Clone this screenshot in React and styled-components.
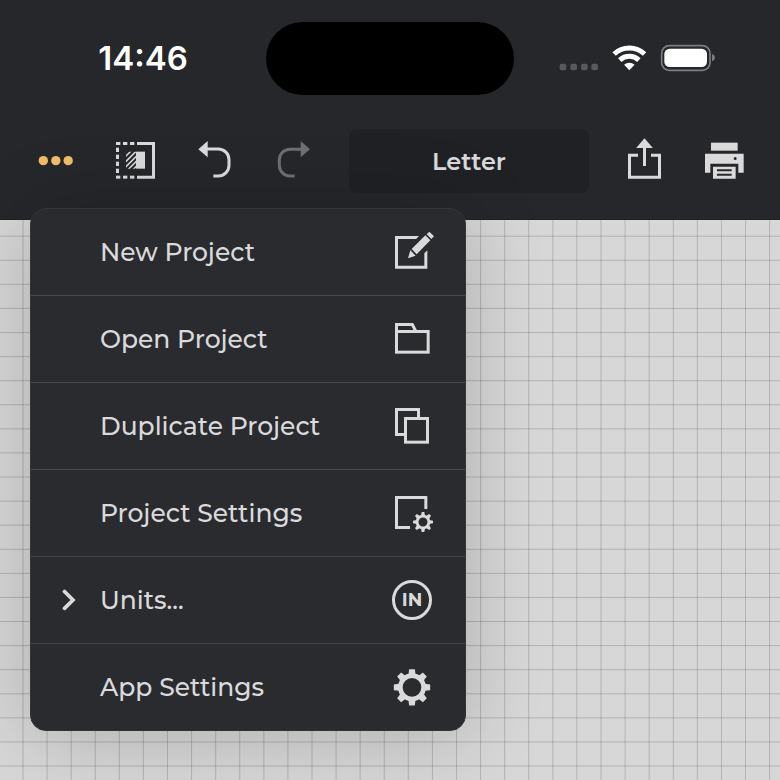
import React from "react";
import styled, { createGlobalStyle, css } from "styled-components";

const GlobalStyle = createGlobalStyle`
  *, *::before, *::after { box-sizing: border-box; }
  html, body, #root { height: 100%; }
  body {
    margin: 0;
    background: #d7d7d7;
    color: #dadadb;
    font-family: Montserrat, Inter, "Liberation Sans", sans-serif;
    overflow: hidden;
  }
`;

const buttonReset = css`
  margin: 0;
  padding: 0;
  border: 0;
  background: transparent;
  color: inherit;
  font: inherit;
  cursor: pointer;
`;

const Screen = styled.div`
  position: relative;
  display: flex;
  flex-direction: column;
  min-height: 100%;
`;

const Header = styled.header`
  padding: 22px 0 26px;
  background: #26272b;
  border-bottom: 1px solid #201f23;
`;

const StatusBar = styled.div`
  display: grid;
  grid-template-columns: 1fr 248px 1fr;
  align-items: center;
  padding: 0 20px;
`;

const Clock = styled.time`
  justify-self: center;
  color: #fff;
  font-family: Inter, "Liberation Sans", sans-serif;
  font-size: 33px;
  font-weight: 600;
  line-height: 40px;
  padding-bottom: 1px;
`;

const Island = styled.div`
  height: 73px;
  border-radius: 37px;
  background: #000;
`;

const StatusIcons = styled.div`
  display: flex;
  justify-self: center;
  align-items: flex-end;
  gap: 13px;
  padding-bottom: 1px;
`;

const StatusIcon = styled.svg`
  display: block;
  width: ${(p) => p.$w}px;
  height: ${(p) => p.$h}px;
`;

const Toolbar = styled.div`
  display: flex;
  align-items: center;
  margin-top: 34px;
  padding: 0 16px 0 15px;
`;

const ToolButton = styled.button`
  ${buttonReset}
  display: grid;
  place-items: center;
  flex: 0 0 80px;
  height: 64px;
  color: ${(p) => (p.$accent ? "#f1bd6b" : "#dadadb")};

  &:disabled {
    color: #6e6f72;
    cursor: default;
  }
`;

const PageSizeButton = styled.button`
  ${buttonReset}
  flex: 1;
  min-width: 0;
  height: 64px;
  margin: 0 15px 0 14px;
  border-radius: 8px;
  background: #202124;
  font-size: 24px;
  font-weight: 600;
`;

const Glyph = styled.svg`
  display: block;
  width: 48px;
  height: 48px;
  fill: none;
  stroke: none;
`;

const Canvas = styled.main`
  flex: 1;
  display: flex;
  background: #d7d7d7;
`;

const GridDrawing = styled.svg`
  flex: 1;
  width: 100%;
  min-height: 100%;
`;

const Menu = styled.nav`
  position: absolute;
  top: 208px;
  left: 30px;
  width: 436px;
  max-width: calc(100% - 60px);
  border: 1px solid #323337;
  border-radius: 16px;
  background: #2a2b2f;
  overflow: hidden;
  box-shadow: 0 4px 80px rgba(0, 0, 0, 0.2);
`;

const MenuItem = styled.button`
  ${buttonReset}
  display: grid;
  grid-template-columns: 14px 1fr 48px;
  column-gap: 24px;
  align-items: center;
  width: 100%;
  height: 87px;
  padding: 0 29px 0 31px;
  border-bottom: 1px solid #47484c;
  font-size: 25px;
  font-weight: 500;
  text-align: left;

  &:last-child {
    height: 86px;
    border-bottom: 0;
  }
`;

const MenuLabel = styled.span`
  grid-column: 2;
  white-space: nowrap;
`;

const Chevron = styled.svg`
  grid-column: 1;
  width: 14px;
  height: 22px;
`;

const UnitBadge = styled.span`
  display: grid;
  place-items: center;
  justify-self: center;
  width: 40px;
  height: 40px;
  border: 3px solid #dadadb;
  border-radius: 50%;
  font-size: 18px;
  font-weight: 700;
  line-height: 20px;
`;

const TEETH = [0, 45, 90, 135, 180, 225, 270, 315];

function Gear({ cx, cy, hole, body, outer, tooth }) {
  const half = tooth / 2;
  return (
    <g transform={`translate(${cx} ${cy})`}>
      <circle r={(hole + body) / 2} stroke="currentColor" strokeWidth={body - hole} />
      {TEETH.map((angle) => (
        <path
          key={angle}
          transform={`rotate(${angle})`}
          fill="currentColor"
          d={`M${-half - 2} ${-body + 3} L${-half} ${-outer} H${half} L${half + 2} ${-body + 3} Z`}
        />
      ))}
    </g>
  );
}

function MoreIcon() {
  return (
    <Glyph viewBox="93 351 144 144" aria-hidden="true">
      <g fill="currentColor">
        <circle cx="130" cy="422" r="14" />
        <circle cx="167.5" cy="422" r="14" />
        <circle cx="204.5" cy="422" r="14" />
      </g>
    </Glyph>
  );
}

function MirrorIcon() {
  return (
    <Glyph viewBox="333 351 144 144" aria-hidden="true">
      <defs>
        <clipPath id="hatch">
          <rect x="378" y="395" width="30" height="51" />
        </clipPath>
      </defs>
      <path d="M411 370.5H460.5V471.5H411" stroke="currentColor" strokeWidth="9" />
      <g fill="currentColor">
        {[348, 369, 390].map((x) => (
          <React.Fragment key={x}>
            <rect x={x} y="366" width="13" height="9" />
            <rect x={x} y="467" width="13" height="9" />
          </React.Fragment>
        ))}
        {[383, 404, 425, 446].map((y) => (
          <rect key={y} x="348" y={y} width="9" height="13" />
        ))}
        <rect x="408" y="395" width="27" height="51" />
      </g>
      <path
        clipPath="url(#hatch)"
        d="M370 416L396 390M370 432L412 390M370 448L412 406M376 457L412 421M390 458L412 436"
        stroke="currentColor"
        strokeWidth="4.5"
      />
    </Glyph>
  );
}

function UndoIcon() {
  return (
    <Glyph viewBox="573 351 144 144" aria-hidden="true">
      <path d="M595 387.5L623 363V412Z" fill="currentColor" />
      <path
        d="M620 387H655A32 32 0 0 1 687 419V436A32 32 0 0 1 655 468H640"
        stroke="currentColor"
        strokeWidth="9"
      />
    </Glyph>
  );
}

function RedoIcon() {
  return (
    <Glyph viewBox="33 381 144 144" aria-hidden="true">
      <path d="M150 417.5L122 393V442Z" fill="currentColor" />
      <path
        d="M123 417.5H90A32 32 0 0 0 58 449.5V466A32 32 0 0 0 90 498H104"
        stroke="currentColor"
        strokeWidth="9"
      />
    </Glyph>
  );
}

function ShareIcon() {
  return (
    <Glyph viewBox="300 351 144 144" aria-hidden="true">
      <path
        d="M354 405.5H328.5V471.5H418.5V405.5H393M373.5 380V438"
        stroke="currentColor"
        strokeWidth="9"
      />
      <path d="M373.5 355L398.5 384H348.5Z" fill="currentColor" />
    </Glyph>
  );
}

function PrinterIcon() {
  return (
    <Glyph viewBox="540 351 144 144" aria-hidden="true">
      <g fill="currentColor" fillRule="evenodd">
        <path d="M573 368H653V392H573Z" />
        <path d="M555 401H671V458H655V431H571V458H555ZM645.5 411A4.5 4.5 0 1 0 645.5 420A4.5 4.5 0 1 0 645.5 411Z" />
        <path d="M579 440H647V476H579ZM591 448V454H635V448ZM591 461V467H635V461Z" />
      </g>
    </Glyph>
  );
}

function NewIcon() {
  return (
    <Glyph viewBox="24 39 144 144" aria-hidden="true">
      <path
        d="M45 63H117L108 72H54V152H133V115L142 106V161H45Z"
        fill="currentColor"
      />
      <path
        d="M84 130L91 106L107 122ZM95 102L136 61L151 76L110 118ZM140 58L148 50L162 64L154 72Z"
        fill="currentColor"
      />
    </Glyph>
  );
}

function FolderIcon() {
  return (
    <Glyph viewBox="24 300 144 144" aria-hidden="true">
      <g stroke="currentColor" strokeWidth="9">
        <rect x="49.5" y="349.5" width="95" height="62" />
        <path d="M49.5 350V328.5H97L107 348" />
      </g>
    </Glyph>
  );
}

function DuplicateIcon() {
  return (
    <Glyph viewBox="24 36 144 144" aria-hidden="true">
      <g stroke="currentColor" strokeWidth="9">
        <rect x="76.5" y="85.5" width="66" height="71" />
        <path d="M115.5 84V58.5H49.5V133.5H75" />
      </g>
    </Glyph>
  );
}

function ProjectSettingsIcon() {
  return (
    <Glyph viewBox="24 297 144 144" aria-hidden="true">
      <path d="M90 412.5H49.5V322.5H137.5V357" stroke="currentColor" strokeWidth="9" />
      <Gear cx={129} cy={396} hole={13.5} body={22} outer={30} tooth={8} />
    </Glyph>
  );
}

function UnitIcon() {
  return <UnitBadge>IN</UnitBadge>;
}

function SettingsIcon() {
  return (
    <Glyph viewBox="24 309 144 144" aria-hidden="true">
      <Gear cx={96} cy={382} hole={28} body={42} outer={54.5} tooth={17} />
    </Glyph>
  );
}

const MENU_ITEMS = [
  { label: "New Project", Icon: NewIcon },
  { label: "Open Project", Icon: FolderIcon },
  { label: "Duplicate Project", Icon: DuplicateIcon },
  { label: "Project Settings", Icon: ProjectSettingsIcon },
  { label: "Units...", Icon: UnitIcon, expandable: true },
  { label: "App Settings", Icon: SettingsIcon },
];

const TILE = 289;
const GRID_STEPS = Array.from({ length: 12 }, (_, i) => (i * TILE) / 12 + 12);

function SquaredPaper() {
  return (
    <GridDrawing aria-hidden="true">
      <defs>
        <pattern id="squares" x="11" y="4" width={TILE} height={TILE} patternUnits="userSpaceOnUse">
          <path
            d={GRID_STEPS.map((s) => `M${s} 0V${TILE}M0 ${s + 0.2}H${TILE}`).join("")}
            stroke="#000"
            strokeOpacity="0.17"
          />
        </pattern>
      </defs>
      <rect width="100%" height="100%" fill="url(#squares)" />
    </GridDrawing>
  );
}

export default function App() {
  return (
    <Screen>
      <GlobalStyle />
      <Header>
        <StatusBar>
          <Clock>14:46</Clock>
          <Island />
          <StatusIcons>
            <StatusIcon $w={40} $h={9} viewBox="117 129 120 27" aria-hidden="true">
              {[119, 151, 183, 214].map((x) => (
                <rect key={x} x={x} y="131" width="20" height="20" rx="6" fill="#58595c" />
              ))}
            </StatusIcon>
            <StatusIcon $w={35} $h={28} viewBox="276 72 105 84" aria-hidden="true">
              <g fill="none" stroke="#fff" strokeWidth="15">
                <path d="M282.3 102A67 67 0 0 1 373.7 102" />
                <path d="M299.4 120.3A42 42 0 0 1 356.6 120.3" />
              </g>
              <path d="M328 151L312.3 134.2A23 23 0 0 1 343.7 134.2Z" fill="#fff" />
            </StatusIcon>
            <StatusIcon $w={56} $h={28} viewBox="420 72 168 84" aria-hidden="true">
              <rect x="425" y="77" width="145" height="74" rx="23" fill="none" stroke="#7d7d80" strokeWidth="5" />
              <rect x="433" y="86" width="128" height="55" rx="16" fill="#fff" />
              <path d="M576 102Q585 106 585 113T576 124Z" fill="#7d7d80" />
            </StatusIcon>
          </StatusIcons>
        </StatusBar>
        <Toolbar>
          <ToolButton $accent aria-label="More" aria-expanded="true"><MoreIcon /></ToolButton>
          <ToolButton aria-label="Mirror"><MirrorIcon /></ToolButton>
          <ToolButton aria-label="Undo"><UndoIcon /></ToolButton>
          <ToolButton aria-label="Redo" disabled><RedoIcon /></ToolButton>
          <PageSizeButton>Letter</PageSizeButton>
          <ToolButton aria-label="Share"><ShareIcon /></ToolButton>
          <ToolButton aria-label="Print"><PrinterIcon /></ToolButton>
        </Toolbar>
      </Header>
      <Canvas>
        <SquaredPaper />
      </Canvas>
      <Menu aria-label="Project">
        {MENU_ITEMS.map(({ label, Icon, expandable }) => (
          <MenuItem key={label}>
            {expandable && (
              <Chevron viewBox="186 89 42 66" aria-hidden="true">
                <path
                  d="M193.5 96.5L219 122L193.5 147"
                  fill="none"
                  stroke="currentColor"
                  strokeWidth="11"
                  strokeLinecap="round"
                />
              </Chevron>
            )}
            <MenuLabel>{label}</MenuLabel>
            <Icon />
          </MenuItem>
        ))}
      </Menu>
    </Screen>
  );
}
